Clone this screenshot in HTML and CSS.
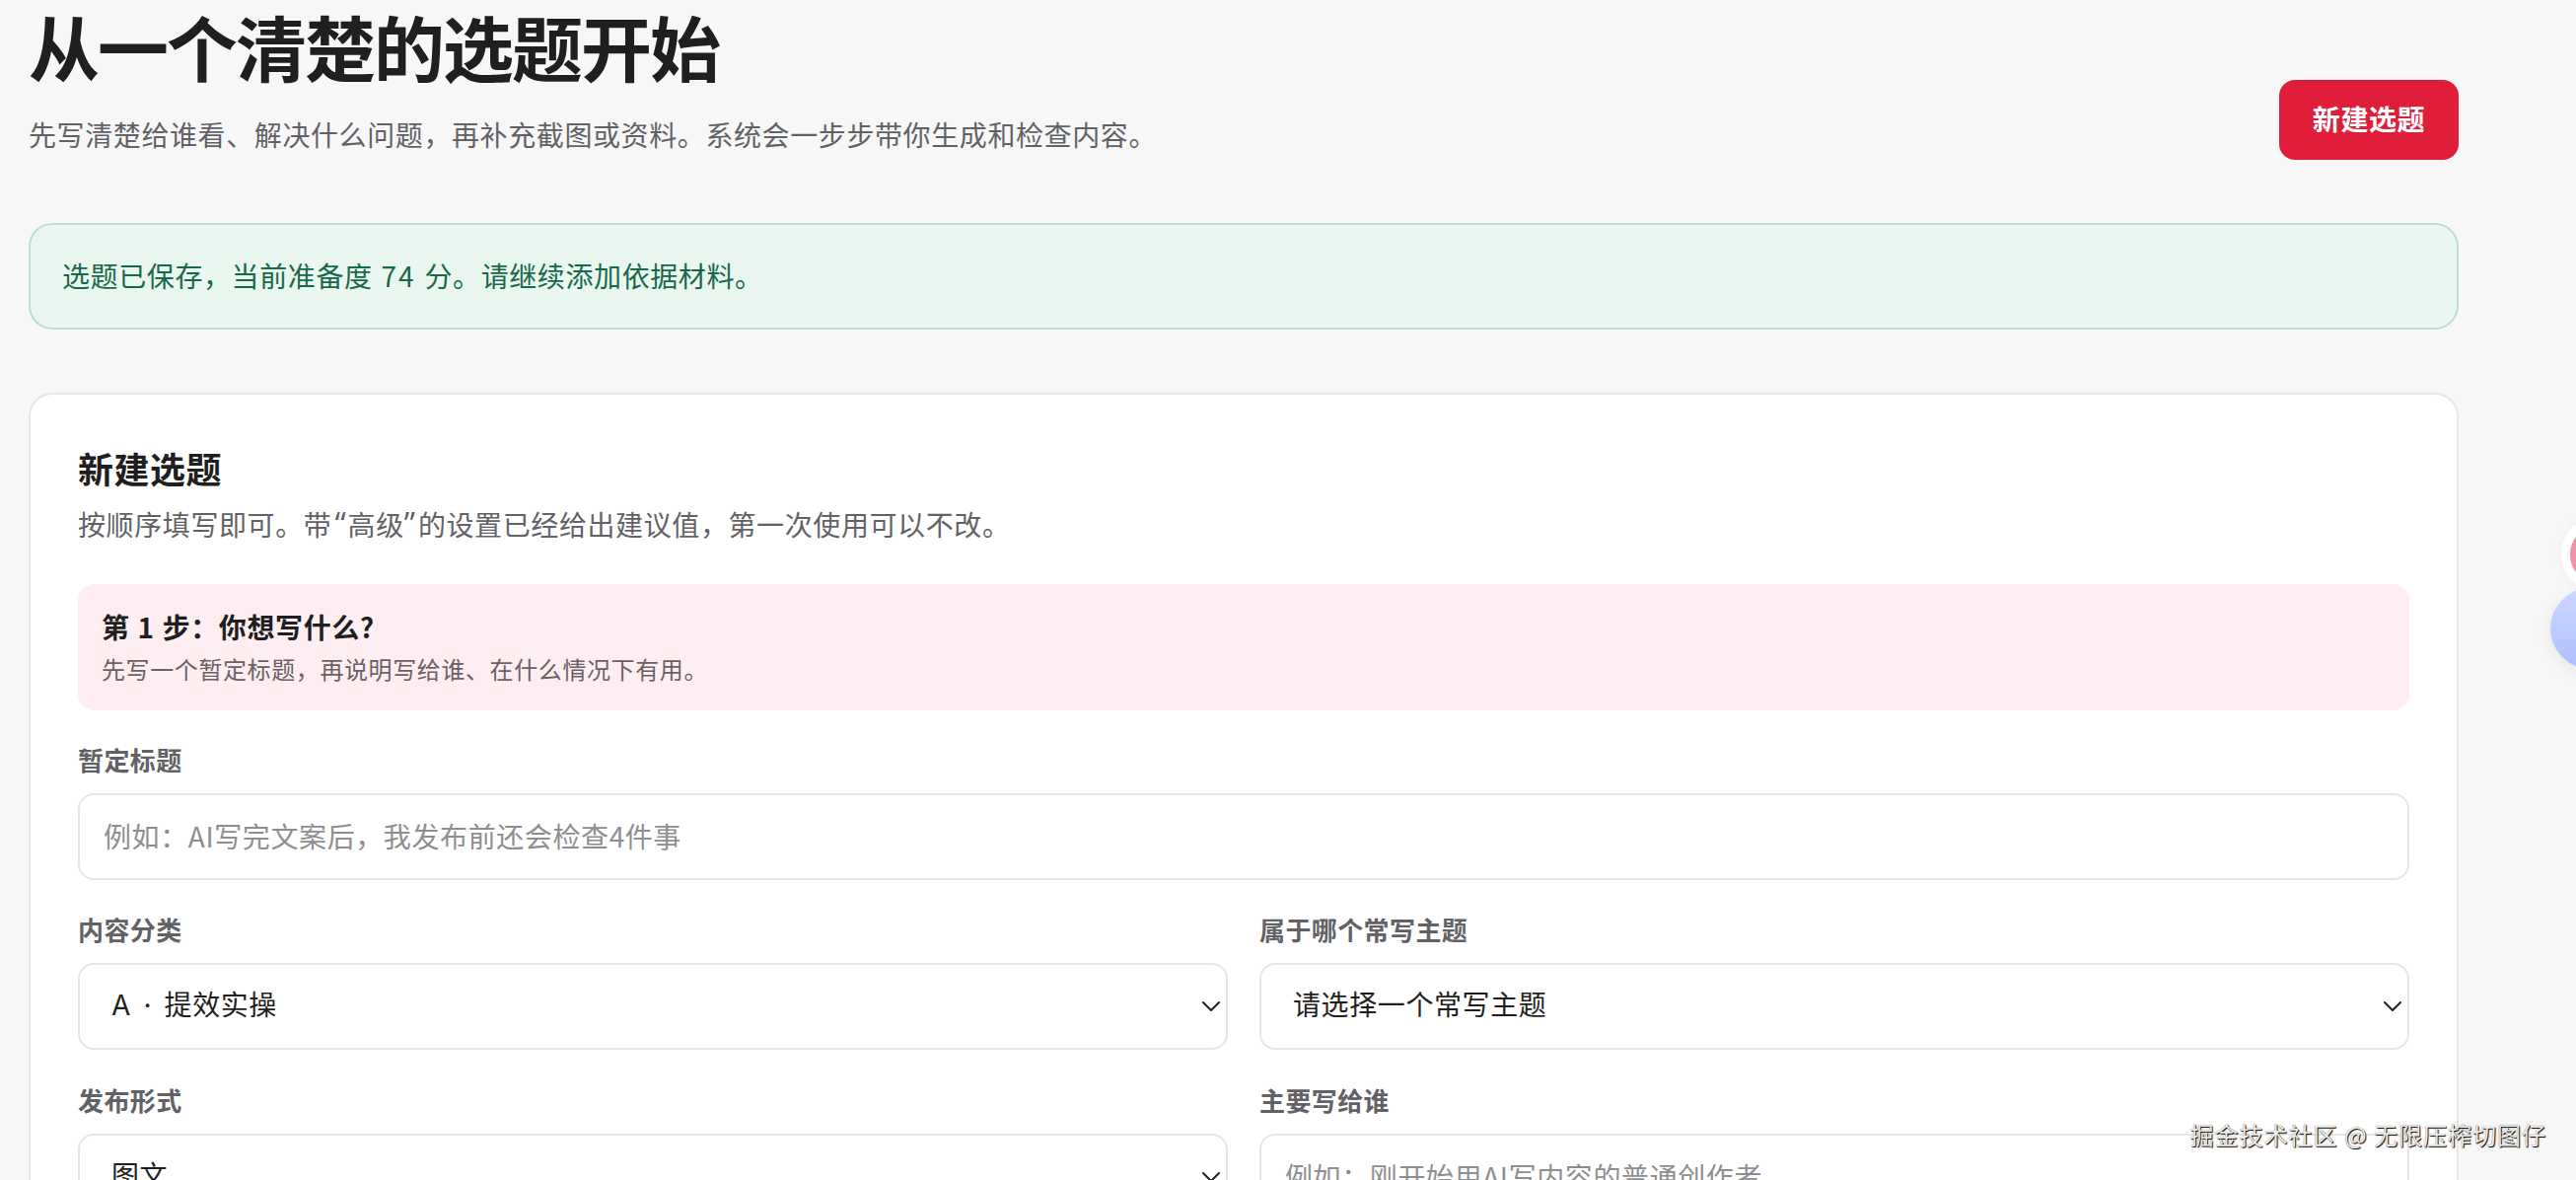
FILE: index.html
```html
<!DOCTYPE html>
<html lang="zh-CN">
<head>
<meta charset="utf-8">
<title>新建选题</title>
<link rel="stylesheet" href="styles.css">
</head>
<body>
<main class="page">
  <header class="page-header">
    <div>
      <h1 class="page-title">从一个清楚的选题开始</h1>
      <p class="page-intro">先写清楚给谁看、解决什么问题，再补充截图或资料。系统会一步步带你生成和检查内容。</p>
    </div>
    <button class="primary-button" type="button">新建选题</button>
  </header>

  <div class="notice" role="status">选题已保存，当前准备度 <span class="score">74</span> 分。请继续添加依据材料。</div>

  <section class="card">
    <h2 class="card-title">新建选题</h2>
    <p class="card-intro">按顺序填写即可。带<span class="quote quote-open">“</span>高级<span class="quote">”</span>的设置已经给出建议值，第一次使用可以不改。</p>

    <div class="step">
      <strong class="step-title">第 1 步：你想写什么?</strong>
      <p class="step-text">先写一个暂定标题，再说明写给谁、在什么情况下有用。</p>
    </div>

    <form class="form">
      <label class="field field-wide">
        <span class="field-label">暂定标题</span>
        <input class="control" type="text" placeholder="例如：AI写完文案后，我发布前还会检查4件事">
      </label>
      <label class="field">
        <span class="field-label">内容分类</span>
        <span class="select-box">
          <select class="control select"><option>A · 提效实操</option></select>
          <svg class="chevron" viewBox="0 0 20 12"><path d="M2 2l8 8 8-8"/></svg>
        </span>
      </label>
      <label class="field">
        <span class="field-label">属于哪个常写主题</span>
        <span class="select-box">
          <select class="control select"><option>请选择一个常写主题</option></select>
          <svg class="chevron" viewBox="0 0 20 12"><path d="M2 2l8 8 8-8"/></svg>
        </span>
      </label>
      <label class="field">
        <span class="field-label">发布形式</span>
        <span class="select-box">
          <select class="control select"><option>图文</option></select>
          <svg class="chevron" viewBox="0 0 20 12"><path d="M2 2l8 8 8-8"/></svg>
        </span>
      </label>
      <label class="field">
        <span class="field-label">主要写给谁</span>
        <input class="control" type="text" placeholder="例如：刚开始用AI写内容的普通创作者">
      </label>
    </form>
  </section>
</main>

<div class="float-badge"></div>
<div class="float-ball"></div>
<div class="watermark">掘金技术社区 @ 无限压榨切图仔</div>
</body>
</html>
```

FILE: styles.css
```css
* {
  box-sizing: border-box;
}

html {
  height: 1196px;
  overflow: hidden;
}

body {
  margin: 0;
  height: 1196px;
  position: relative;
  overflow: hidden;
  background: #f7f7f7;
  color: #1f1f21;
  font-family: "Noto Sans CJK SC", sans-serif;
  font-size: 28px;
  letter-spacing: 0.6px;
}

h1, h2, p {
  margin: 0;
}

.page {
  width: 2464px;
  margin-left: 29px;
}

.page-header {
  display: flex;
  justify-content: space-between;
  height: 226px;
}

.page-title {
  font-size: 72px;
  line-height: 92px;
  font-weight: 700;
  letter-spacing: -2px;
}

.page-intro {
  margin-top: 21px;
  line-height: 46px;
  color: #626266;
}

.primary-button {
  width: 182px;
  height: 81px;
  margin-top: 81px;
  padding: 0 0 3px;
  border: 0;
  border-radius: 16px;
  background: #e01e39;
  color: #fff;
  font: inherit;
  font-weight: 700;
  letter-spacing: 0.6px;
}

.notice {
  height: 108px;
  padding: 0 32px;
  border: 2px solid #badfd0;
  border-radius: 24px;
  background: #eaf7f0;
  color: #17694a;
  line-height: 102px;
  word-spacing: 2px;
}

.score {
  letter-spacing: 2px;
}

.card {
  margin-top: 64px;
  height: 800px;
  padding: 48px;
  border: 2px solid #e6e6e7;
  border-radius: 24px 24px 0 0;
  border-bottom: 0;
  background: #fff;
}

.card-title {
  font-size: 36px;
  line-height: 52px;
  font-weight: 700;
  letter-spacing: 0.5px;
}

.card-intro {
  height: 46px;
  margin-top: 8px;
  line-height: 46px;
  color: #626266;
}

.quote {
  padding-right: 1px;
  font-family: "Open Sans", sans-serif;
  font-size: 32px;
  line-height: 1;
  letter-spacing: 2px;
}

.quote-open {
  padding: 0 0 0 3px;
}

.step {
  margin-top: 38px;
  height: 128px;
  padding: 22px 24px 0;
  border-radius: 16px;
  background: #feeef1;
}

.step-title {
  display: block;
  line-height: 42px;
  word-spacing: 1px;
}

.step-text {
  margin-top: 3px;
  font-size: 24px;
  line-height: 38px;
  color: #6a6165;
}

.form {
  display: grid;
  grid-template-columns: 1fr 1fr;
  gap: 32px;
  margin-top: 32px;
}

.field {
  display: flex;
  flex-direction: column;
  gap: 16px;
  height: 140.4px;
}

.field-wide {
  grid-column: 1 / -1;
}

.field-label {
  font-size: 26px;
  line-height: 36px;
  font-weight: 700;
  letter-spacing: 0.4px;
  color: #626266;
}

.control {
  display: block;
  width: 100%;
  height: 88px;
  padding: 0 24px 2px;
  border: 2px solid #e6e6e7;
  border-radius: 16px;
  background: #fff;
  color: #1f1f21;
  font: inherit;
  letter-spacing: 0.6px;
}

.control::placeholder {
  color: #8e8e91;
  opacity: 1;
}

.select-box {
  position: relative;
}

.select {
  padding: 0 32px 2px;
  appearance: none;
  font-family: Inter, "Noto Sans CJK SC", sans-serif;
  word-spacing: 4px;
}

.chevron {
  position: absolute;
  right: 7px;
  top: 38px;
  width: 20px;
  height: 12px;
  fill: none;
  stroke: #1f1f21;
  stroke-width: 2;
  stroke-linecap: round;
  stroke-linejoin: round;
}

.float-badge {
  position: absolute;
  left: 2597px;
  top: 523px;
  width: 78px;
  height: 78px;
  border: 9px solid #fff;
  border-radius: 50%;
  background: #f18fa9;
  box-shadow: 0 0 12px rgba(0, 0, 0, 0.04);
}

.float-ball {
  position: absolute;
  left: 2586px;
  top: 596px;
  width: 82px;
  height: 82px;
  border-radius: 50%;
  background: linear-gradient(#ccd7ff, #afbffd);
  box-shadow: 0 4px 16px rgba(0, 0, 0, 0.08);
}

.watermark {
  position: absolute;
  right: 30px;
  top: 1132px;
  font-size: 24px;
  line-height: 36px;
  letter-spacing: 1px;
  white-space: nowrap;
  color: #ececec;
  text-shadow: 1px 1px 1px #000, 0 0 1px #777;
}
```
